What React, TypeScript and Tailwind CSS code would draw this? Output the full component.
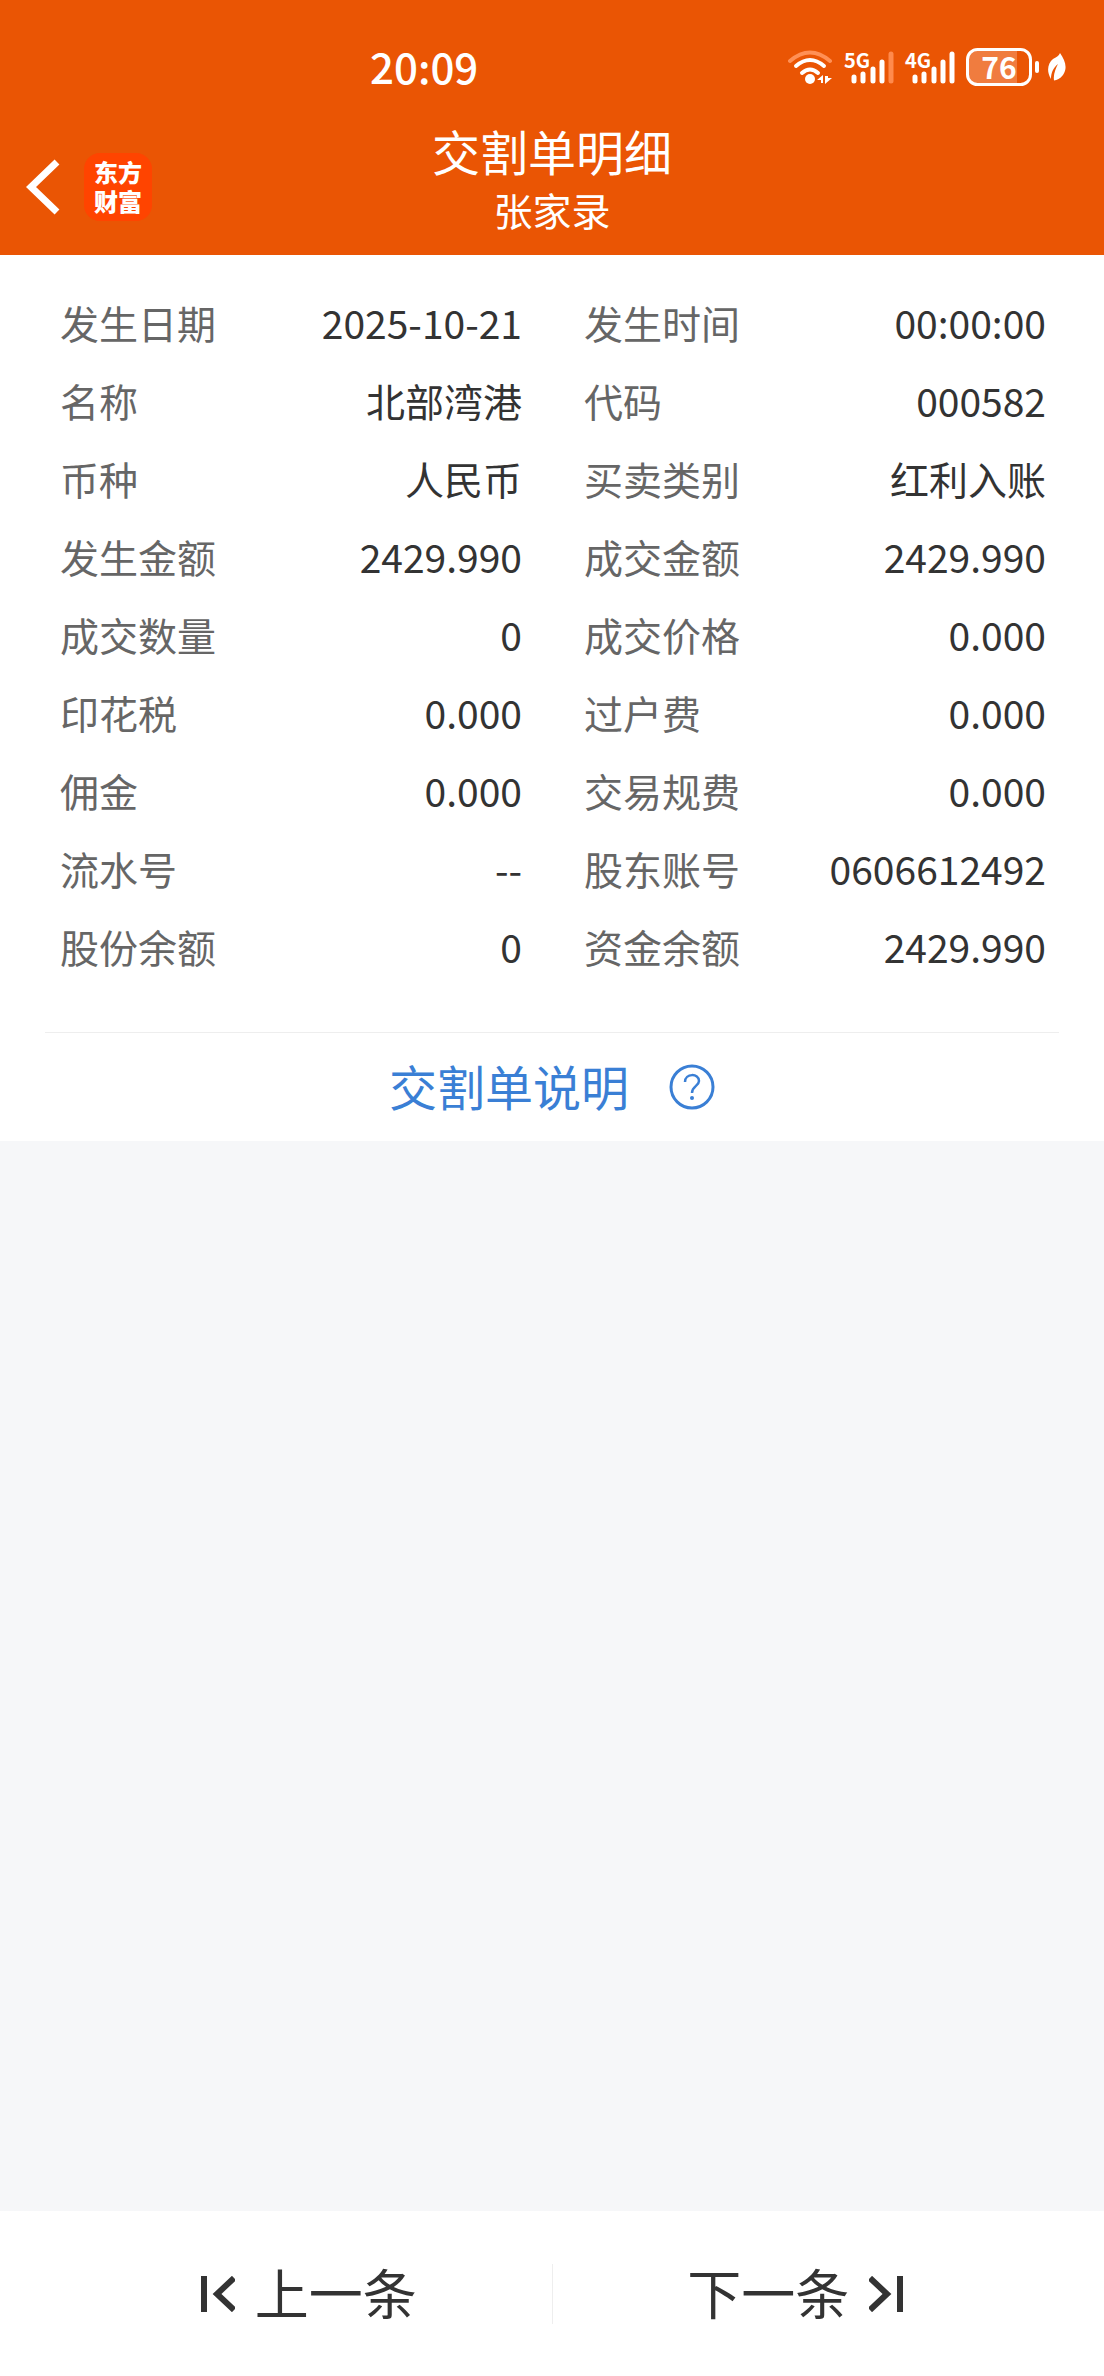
import React from 'react';

const details = [
  ['发生日期', '2025-10-21', '发生时间', '00:00:00'],
  ['名称', '北部湾港', '代码', '000582'],
  ['币种', '人民币', '买卖类别', '红利入账'],
  ['发生金额', '2429.990', '成交金额', '2429.990'],
  ['成交数量', '0', '成交价格', '0.000'],
  ['印花税', '0.000', '过户费', '0.000'],
  ['佣金', '0.000', '交易规费', '0.000'],
  ['流水号', '--', '股东账号', '0606612492'],
  ['股份余额', '0', '资金余额', '2429.990'],
];

const Wifi: React.FC = () => (
  <svg className="w-[46px] h-9" viewBox="0 0 46 36" fill="none" stroke="#fff" strokeWidth="4" strokeLinecap="round">
    <path d="M2 12 Q22 -5 42 12" stroke="#ff9055" />
    <path d="M8 17 Q22 5 36 17" />
    <path d="M14 24 Q22 17 30 24" />
    <circle cx="22" cy="30" r="5" fill="#fff" stroke="none" />
    <path d="M29 31 L35 26 V34 H33 V31 Z M37 27 V35 L44 29 H40 V27 Z" fill="#fff" stroke="none" />
  </svg>
);

const Signal: React.FC<{ label: string; weak?: boolean }> = ({ label, weak }) => (
  <div className="relative">
    <svg className="w-[51px] h-9" viewBox="0 0 51 36" fill="none" stroke="#fff" strokeWidth="5" strokeLinecap="round">
      <path d="M10 28 V32 M19 25 V32 M29 20 V32 M38 13 V32" />
      <path d="M47 5 V32" stroke={weak ? '#ff8a4c' : '#fff'} />
    </svg>
    <span className="absolute left-0 -top-1 text-[20px] leading-[30px] font-bold">{label}</span>
  </div>
);

const Battery: React.FC = () => (
  <div className="relative flex">
    <svg className="w-[74px] h-[38px]" viewBox="0 0 74 38" fill="none">
      <path d="M51 2 H12 Q2 2 2 12 V26 Q2 36 12 36 H51 Z" fill="#f07c3f" />
      <rect x="1.5" y="1.5" width="63" height="35" rx="10" stroke="#fff" strokeWidth="3" />
      <rect x="69" y="13" width="4" height="12" rx="2" fill="#fff" />
    </svg>
    <span className="absolute inset-y-0 left-0 w-[66px] text-center text-[30px] leading-[36px] font-bold">76</span>
  </div>
);

const Leaf: React.FC = () => (
  <svg className="w-[18px] h-7" viewBox="0 0 18 28">
    <path
      d="M12 0 C17 7 20 15 15 22 C12 26 9 27 6 27.5 C5 21 8 15 10 11 C5 15 3 20 3 26 C-2 18 0 10 5 6 C8 4 11 3 12 0 Z"
      fill="#fff"
    />
  </svg>
);

const App: React.FC = () => {
  return (
    <div
      className="flex flex-col min-h-screen bg-[#f6f7f9] text-[#333333]"
      style={{ fontFamily: "'Noto Sans CJK SC', sans-serif" }}
    >
      <header className="bg-[#ea5504] text-white">
        {/* 状态栏 */}
        <div className="flex items-center justify-between h-[120px] pt-4 pl-[370px] pr-[38px]">
          <span className="text-[42px] leading-[60px] pb-1 font-medium">20:09</span>
          <div className="flex items-center gap-2.5 pb-0.5">
            <Wifi />
            <Signal label="5G" weak />
            <Signal label="4G" />
            <div className="flex items-center gap-2">
              <Battery />
              <Leaf />
            </div>
          </div>
        </div>

        {/* 标题 */}
        <div className="grid grid-cols-[1fr_auto_1fr] items-center h-[135px]">
          <div className="flex items-center gap-6 pl-[26px] pb-1">
            <button type="button" aria-label="返回">
              <svg className="w-[34px] h-[56px]" viewBox="0 0 34 56" fill="none" stroke="#fff" strokeWidth="7">
                <path d="M31 3 L5 28 L31 53" />
              </svg>
            </button>
            <div className="flex justify-center size-[68px] rounded-2xl bg-[#ff4400]">
              <p className="w-12 pt-1 text-2xl leading-[29px] font-black break-all">东方财富</p>
            </div>
          </div>
          <div className="text-center pb-5">
            <h1 className="text-[48px] leading-[60px]">交割单明细</h1>
            <p className="text-[39px] leading-[58px]">张家录</p>
          </div>
        </div>
      </header>

      <main className="bg-white">
        <dl className="pl-[60px] pr-[58px] pt-7 pb-[47px] text-[39px] leading-[78px]">
          {details.map(([labelA, valueA, labelB, valueB]) => (
            <div key={labelA} className="grid grid-cols-2 gap-[62px]">
              <div className="flex justify-between">
                <dt className="text-[#666666]">{labelA}</dt>
                <dd>{valueA}</dd>
              </div>
              <div className="flex justify-between">
                <dt className="text-[#666666]">{labelB}</dt>
                <dd>{valueB}</dd>
              </div>
            </div>
          ))}
        </dl>
        <div className="mx-[45px] border-t border-[#eeeeee]">
          <a href="#" className="flex items-center justify-center gap-[40px] h-[108px] text-[48px] leading-[60px] text-[#3a7fd5]">
            <span className="pb-1">交割单说明</span>
            <svg className="size-[46px]" viewBox="0 0 46 46" fill="none" stroke="#3a7fd5">
              <circle cx="23" cy="23" r="21" strokeWidth="3" />
              <path d="M16 18 C16 9 30 9 30 17 C30 22 23 22 23 29" strokeWidth="2.5" />
              <circle cx="23" cy="34" r="2" fill="#3a7fd5" stroke="none" />
            </svg>
          </a>
        </div>
      </main>

      <footer className="grid grid-cols-[1fr_auto_1fr] items-center h-[165px] mt-auto bg-white text-[54px] leading-[80px]">
        <button type="button" className="flex items-center justify-center gap-5 pl-16">
          <svg className="w-9 h-9" viewBox="0 0 36 36" fill="none" stroke="#333" strokeWidth="6">
            <path d="M5 0 V36" />
            <path d="M35 2 L18 18 L35 34" />
          </svg>
          <span className="pb-1">上一条</span>
        </button>
        <div className="w-px h-[60px] bg-[#eeeeee]" />
        <button type="button" className="flex items-center justify-center gap-5 pr-16">
          <span className="pb-1">下一条</span>
          <svg className="w-9 h-9" viewBox="0 0 36 36" fill="none" stroke="#333" strokeWidth="6">
            <path d="M31 0 V36" />
            <path d="M1 2 L18 18 L1 34" />
          </svg>
        </button>
      </footer>
    </div>
  );
};

export default App;
